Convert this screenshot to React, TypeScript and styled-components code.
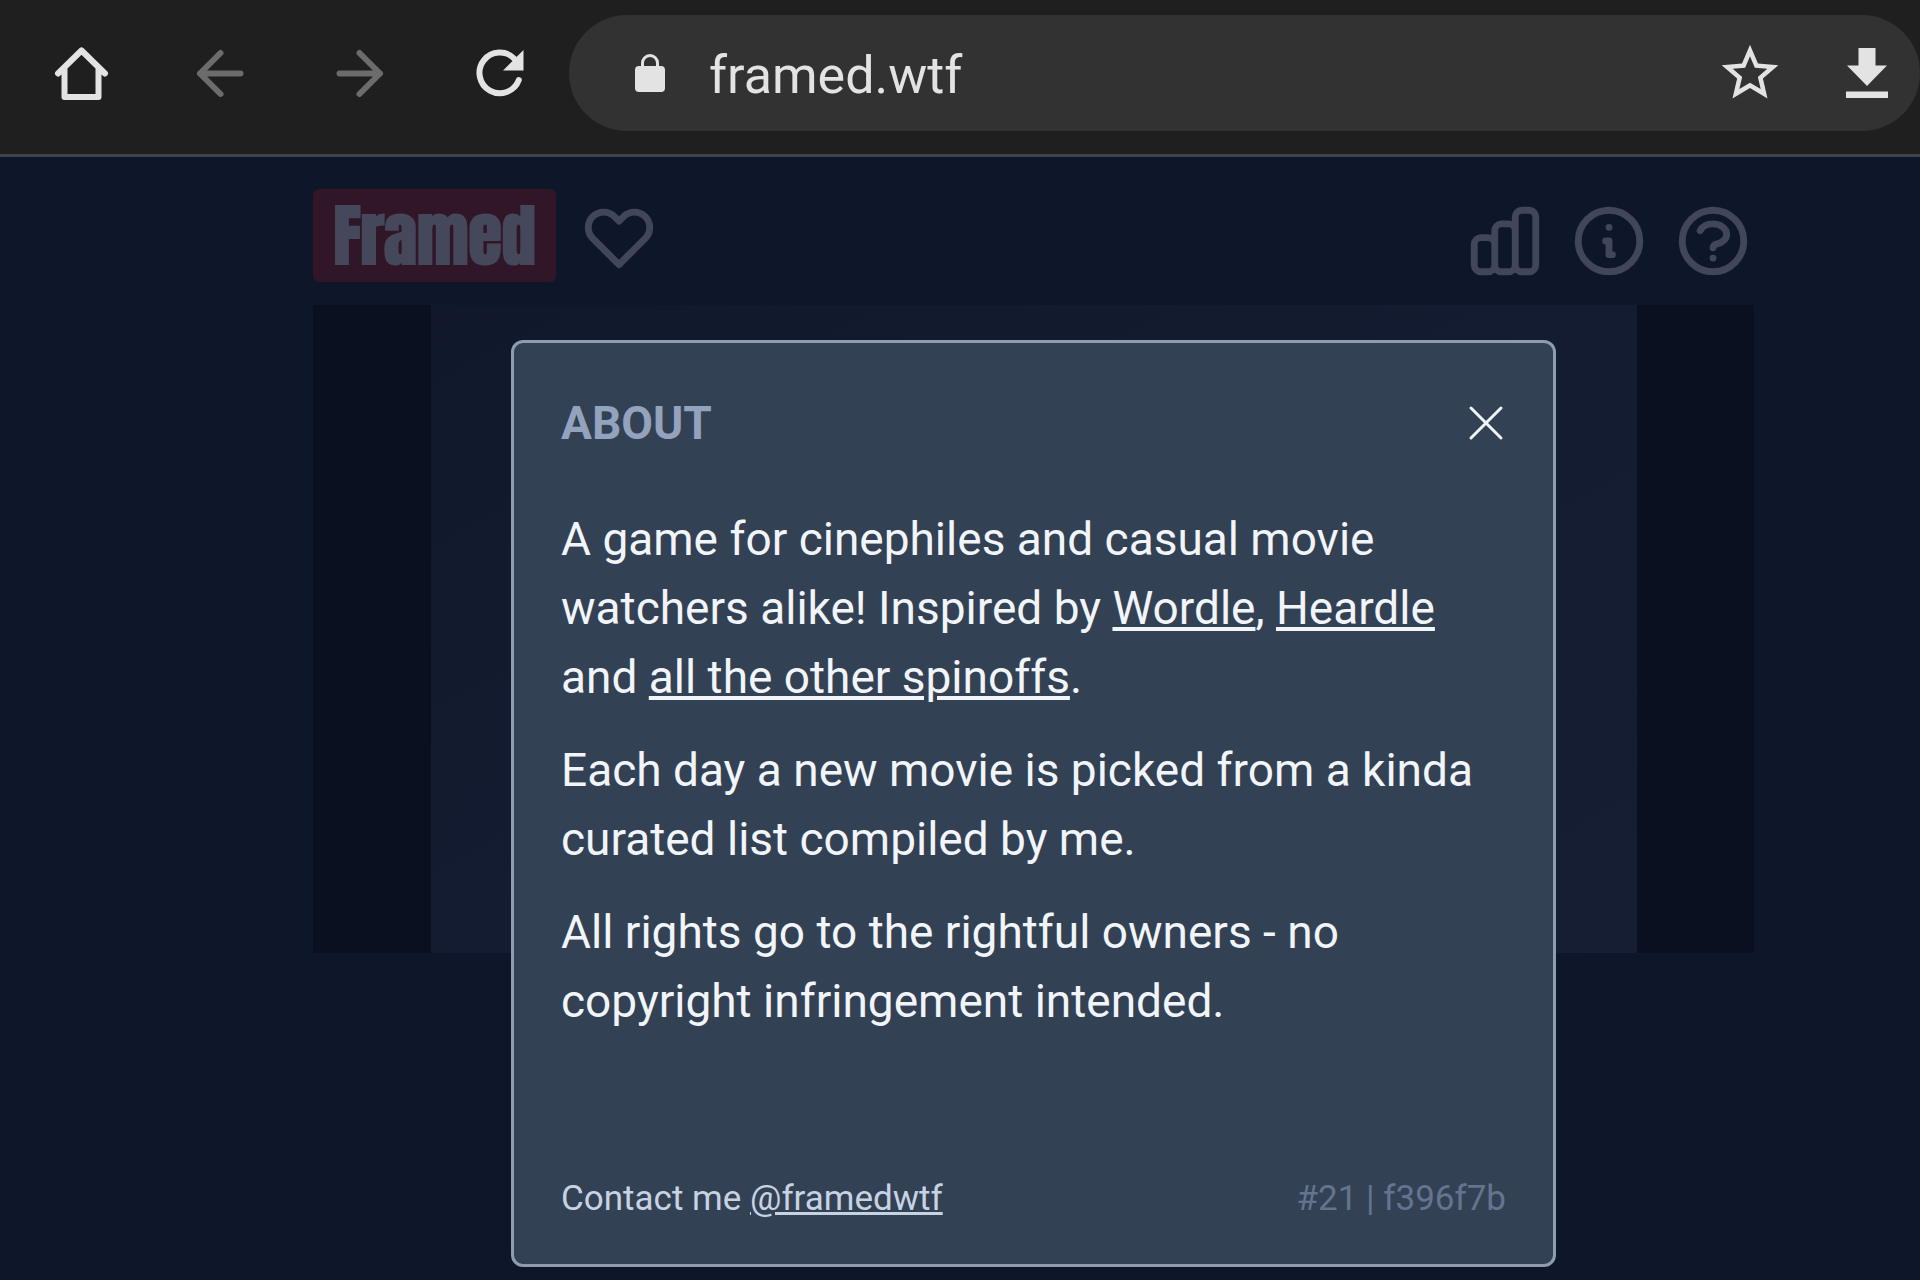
import React from 'react';
import styled, { createGlobalStyle } from 'styled-components';

const GlobalStyle = createGlobalStyle`
  *, *::before, *::after { box-sizing: border-box; }
  body { margin: 0; background: #0e172a; font-family: Roboto, "Liberation Sans", sans-serif; }
  button { padding: 0; border: 0; background: none; color: inherit; font: inherit; cursor: pointer; }
  svg { display: block; }
  h1, h2, p { margin: 0; }
`;

const Browser = styled.div`
  display: flex;
  flex-direction: column;
  min-height: 100vh;
  overflow: hidden;
`;

const Toolbar = styled.header`
  display: flex;
  align-items: center;
  gap: 34px;
  padding: 15px 0 23px 47px;
  background: #1f1f1f;
  border-bottom: 3px solid #3f434b;
  color: #e3e3e3;
`;

const NavButtons = styled.nav`
  display: flex;
  gap: 72px;
`;

const NavButton = styled.button`
  &:disabled { color: #6c6c6c; }
`;

const AddressBar = styled.div`
  display: flex;
  flex: 1;
  align-items: center;
  min-width: 0;
  height: 116px;
  padding: 0 32px 0 66px;
  border-radius: 58px;
  background: #323232;
`;

const AddressInput = styled.input`
  flex: 1;
  min-width: 0;
  margin: 6px 0 0 44px;
  padding: 0;
  border: 0;
  outline: 0;
  background: none;
  color: #e3e3e3;
  font: 400 52px/64px Roboto, "Liberation Sans", sans-serif;
`;

const AddressActions = styled.div`
  display: flex;
  align-items: center;
  gap: 62px;
`;

const Page = styled.div`
  position: relative;
  flex: 1;
  padding: 32px 166px 0 313px;
  background: #0e172a;
`;

const GameHeader = styled.div`
  display: flex;
  align-items: center;
  gap: 22px;
  height: 93px;
  color: #42465b;
`;

const Logo = styled.h1`
  display: flex;
  align-items: center;
  justify-content: center;
  width: 243px;
  height: 93px;
  border-radius: 6px;
  background: #311628;
  color: #45475b;
  font: 700 68px/93px Anton, Impact, "Roboto Condensed", "Liberation Sans Narrow", sans-serif;
`;

const HeaderActions = styled.div`
  display: flex;
  gap: 22px;
  margin-left: auto;
  padding-top: 10px;
`;

const Still = styled.div`
  display: grid;
  grid-template-columns: 118px 1fr 117px;
  height: 648px;
  margin-top: 23px;
  background: #0a101f;
`;

const StillImage = styled.div`
  grid-column: 2;
  background: linear-gradient(to bottom right, #11182c, #141c31 50%, #151e32);
`;

const Overlay = styled.div`
  position: absolute;
  inset: 0;
  display: flex;
  justify-content: center;
  align-items: flex-start;
  padding: 183px 0 12px 147px;
`;

const Dialog = styled.section`
  width: 1045px;
  padding: 48px 47px 47px;
  border: 3px solid #8e9bb0;
  border-radius: 12px;
  background: #334154;
  color: #f1f5f9;
`;

const DialogHeader = styled.div`
  display: flex;
  justify-content: space-between;
  align-items: center;
  margin-bottom: 50px;
`;

const DialogTitle = styled.h2`
  color: #94a3bd;
  font-size: 46px;
  font-weight: 700;
  line-height: 64px;
`;

const DialogBody = styled.div`
  display: flex;
  flex-direction: column;
  gap: 24px;
  font-size: 46px;
  line-height: 69px;
`;

const TextLink = styled.a`
  color: inherit;
  text-decoration: underline;
`;

const DialogFooter = styled.footer`
  display: flex;
  justify-content: space-between;
  margin-top: 145px;
  color: #c7d3e3;
  font-size: 35px;
  line-height: 36px;
`;

const Build = styled.span`
  color: #64748f;
`;

function BarIcon({ children }: { children: React.ReactNode }) {
  return (
    <svg width="68" height="68" viewBox="0 0 68 68" fill="none" stroke="currentColor" strokeWidth="6" strokeLinecap="round" strokeLinejoin="round" aria-hidden="true">
      {children}
    </svg>
  );
}

function OutlineIcon({ d }: { d: string }) {
  return (
    <svg width="82" height="82" viewBox="0 0 24 24" fill="none" stroke="currentColor" strokeWidth="2" strokeLinecap="round" strokeLinejoin="round" aria-hidden="true">
      <path d={d} />
    </svg>
  );
}

const heart = 'M4.318 6.318a4.5 4.5 0 000 6.364L12 20.364l7.682-7.682a4.5 4.5 0 00-6.364-6.364L12 7.636l-1.318-1.318a4.5 4.5 0 00-6.364 0z';
const chart = 'M9 19v-6a2 2 0 00-2-2H5a2 2 0 00-2 2v6a2 2 0 002 2h2a2 2 0 002-2zm0 0V9a2 2 0 012-2h2a2 2 0 012 2v10m-6 0a2 2 0 002 2h2a2 2 0 002-2m0 0V5a2 2 0 012-2h2a2 2 0 012 2v14a2 2 0 01-2 2h-2a2 2 0 01-2-2z';
const info = 'M13 16h-1v-4h-1m1-4h.01M21 12a9 9 0 11-18 0 9 9 0 0118 0z';
const question = 'M8.228 9c.549-1.165 2.03-2 3.772-2 2.21 0 4 1.343 4 3 0 1.4-1.278 2.575-3.006 2.907-.542.104-.994.54-.994 1.093m0 3h.01M21 12a9 9 0 11-18 0 9 9 0 0118 0z';

export default function App() {
  return (
    <Browser>
      <GlobalStyle />
      <Toolbar>
        <NavButtons aria-label="Browser">
          <NavButton aria-label="Home">
            <BarIcon>
              <path d="M11 34.5 34.5 11.5 58 34.5M17.5 30V58H51.5V30" />
            </BarIcon>
          </NavButton>
          <NavButton aria-label="Back" disabled>
            <BarIcon>
              <path d="M53.5 34.5H13M33.5 14 13 34.5 33.5 55" />
            </BarIcon>
          </NavButton>
          <NavButton aria-label="Forward" disabled>
            <BarIcon>
              <path d="M12.5 34.5H53M32.5 14 53 34.5 32.5 55" />
            </BarIcon>
          </NavButton>
          <NavButton aria-label="Reload">
            <BarIcon>
              <path d="M51.8 41A20.3 20.3 0 1 1 47.6 20" />
              <path d="M56.5 11V31.5H36z" fill="currentColor" stroke="none" />
            </BarIcon>
          </NavButton>
        </NavButtons>
        <AddressBar>
          <svg width="30" height="38" viewBox="0 0 30 38" fill="none" aria-hidden="true">
            <rect y="12" width="30" height="26" rx="4" fill="currentColor" />
            <path d="M7.5 14V9a7.5 7.5 0 0 1 15 0v5" stroke="currentColor" strokeWidth="3" />
          </svg>
          <AddressInput aria-label="Address" defaultValue="framed.wtf" spellCheck={false} />
          <AddressActions>
            <button aria-label="Bookmark">
              <svg width="68" height="68" viewBox="0 0 24 24" fill="currentColor" aria-hidden="true">
                <path d="M22 9.24l-7.19-.62L12 2 9.19 8.63 2 9.24l5.46 4.73L5.82 21 12 17.27 18.18 21l-1.63-7.03L22 9.24zM12 15.4l-3.76 2.27 1-4.28-3.32-2.88 4.38-.38L12 6.1l1.71 4.04 4.38.38-3.32 2.88 1 4.28L12 15.4z" />
              </svg>
            </button>
            <button aria-label="Download">
              <svg width="42" height="50" viewBox="0 0 42 50" fill="currentColor" aria-hidden="true">
                <path d="M12.5 0h17v17.5H41L21 38 1 17.5h11.5zM0 43.5h42V50H0z" />
              </svg>
            </button>
          </AddressActions>
        </AddressBar>
      </Toolbar>
      <Page>
        <GameHeader>
          <Logo>Framed</Logo>
          <button aria-label="Support"><OutlineIcon d={heart} /></button>
          <HeaderActions>
            <button aria-label="Statistics"><OutlineIcon d={chart} /></button>
            <button aria-label="About"><OutlineIcon d={info} /></button>
            <button aria-label="Help"><OutlineIcon d={question} /></button>
          </HeaderActions>
        </GameHeader>
        <Still>
          <StillImage />
        </Still>
        <Overlay>
          <Dialog role="dialog" aria-labelledby="about-title">
            <DialogHeader>
              <DialogTitle id="about-title">ABOUT</DialogTitle>
              <button aria-label="Close">
                <svg width="40" height="40" viewBox="0 0 40 40" fill="none" stroke="currentColor" strokeWidth="3" strokeLinecap="round" aria-hidden="true">
                  <path d="M5 5 35 35M35 5 5 35" />
                </svg>
              </button>
            </DialogHeader>
            <DialogBody>
              <p>
                A game for cinephiles and casual movie watchers alike! Inspired by <TextLink href="#wordle">Wordle</TextLink>,{' '}
                <TextLink href="#heardle">Heardle</TextLink> and <TextLink href="#spinoffs">all the other spinoffs</TextLink>.
              </p>
              <p>Each day a new movie is picked from a kinda curated list compiled by me.</p>
              <p>All rights go to the rightful owners - no copyright infringement intended.</p>
            </DialogBody>
            <DialogFooter>
              <span>
                Contact me <TextLink href="#contact">@framedwtf</TextLink>
              </span>
              <Build>#21 | f396f7b</Build>
            </DialogFooter>
          </Dialog>
        </Overlay>
      </Page>
    </Browser>
  );
}
